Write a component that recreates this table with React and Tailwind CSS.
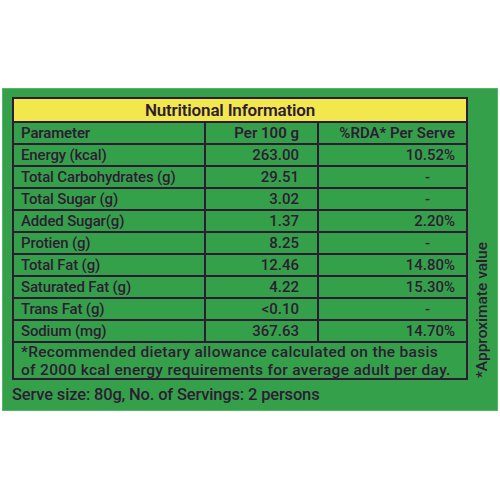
import React from 'react';

const rows = [
  { name: 'Energy (kcal)', per: '263.00', rda: '10.52%' },
  { name: 'Total Carbohydrates (g)', per: '29.51', rda: '-' },
  { name: 'Total Sugar (g)', per: '3.02', rda: '-' },
  { name: 'Added Sugar(g)', per: '1.37', rda: '2.20%' },
  { name: 'Protien (g)', per: '8.25', rda: '-' },
  { name: 'Total Fat (g)', per: '12.46', rda: '14.80%' },
  { name: 'Saturated Fat (g)', per: '4.22', rda: '15.30%' },
  { name: 'Trans Fat (g)', per: '<0.10', rda: '-' },
  { name: 'Sodium (mg)', per: '367.63', rda: '14.70%' },
];

const Row = ({ name, per, rda, head }) => (
  <div className={`flex h-[22px] border-t-2 border-[#2e1c35] items-center ${head ? 'font-semibold' : 'font-medium'}`}>
    <div className="w-[190px] pl-[7px] tracking-[-0.01em]">{name}</div>
    <div className="w-[113px] h-full border-l-2 border-[#2e1c35] flex items-center justify-end pr-[18px]">{per}</div>
    <div className={`flex-1 h-full border-l-2 border-[#2e1c35] flex items-center justify-end ${rda === '-' ? 'pr-[36px]' : 'pr-[11px]'} ${head ? 'pr-[4px]' : ''}`}>
      {rda}
    </div>
  </div>
);

const App = () => {
  return (
    <div className="w-[500px] h-[500px] bg-white pt-[88px] font-['Roboto',sans-serif] text-[#2e1c35]">
      <div className="mx-[2px] h-[323px] bg-[#35a04a] border border-[#52b865] flex">
        <div className="pl-[9px] pt-[8px]">
          <div className="w-[456px] border-2 border-[#2e1c35] text-[15px] leading-none">
            <div className="h-[22px] bg-[#f2e74c] flex items-center justify-center pr-[20px] text-[17px] font-semibold tracking-[-0.01em]">
              Nutritional Information
            </div>
            <Row name="Parameter" per="Per 100 g" rda="%RDA*  Per Serve" head />
            {rows.map(r => (
              <Row key={r.name} {...r} />
            ))}
            <div className="border-t-2 border-[#2e1c35] h-[37px] pl-[7px] text-[15.5px] leading-[18px] tracking-[0.02em] font-medium">
              *Recommended dietary allowance calculated on the basis<br />
              of 2000 kcal energy requirements for average adult per day.
            </div>
          </div>
          <div className="mt-[3px] text-[16.5px] font-medium tracking-[-0.01em]">
            Serve size: 80g, No. of Servings: 2 persons
          </div>
        </div>
        <div className="flex-1 flex items-end justify-center pb-[32px]">
          <div className="[writing-mode:vertical-rl] rotate-180 text-[15.5px] font-medium leading-none">
            *Approximate value
          </div>
        </div>
      </div>
    </div>
  );
};

export default App;
